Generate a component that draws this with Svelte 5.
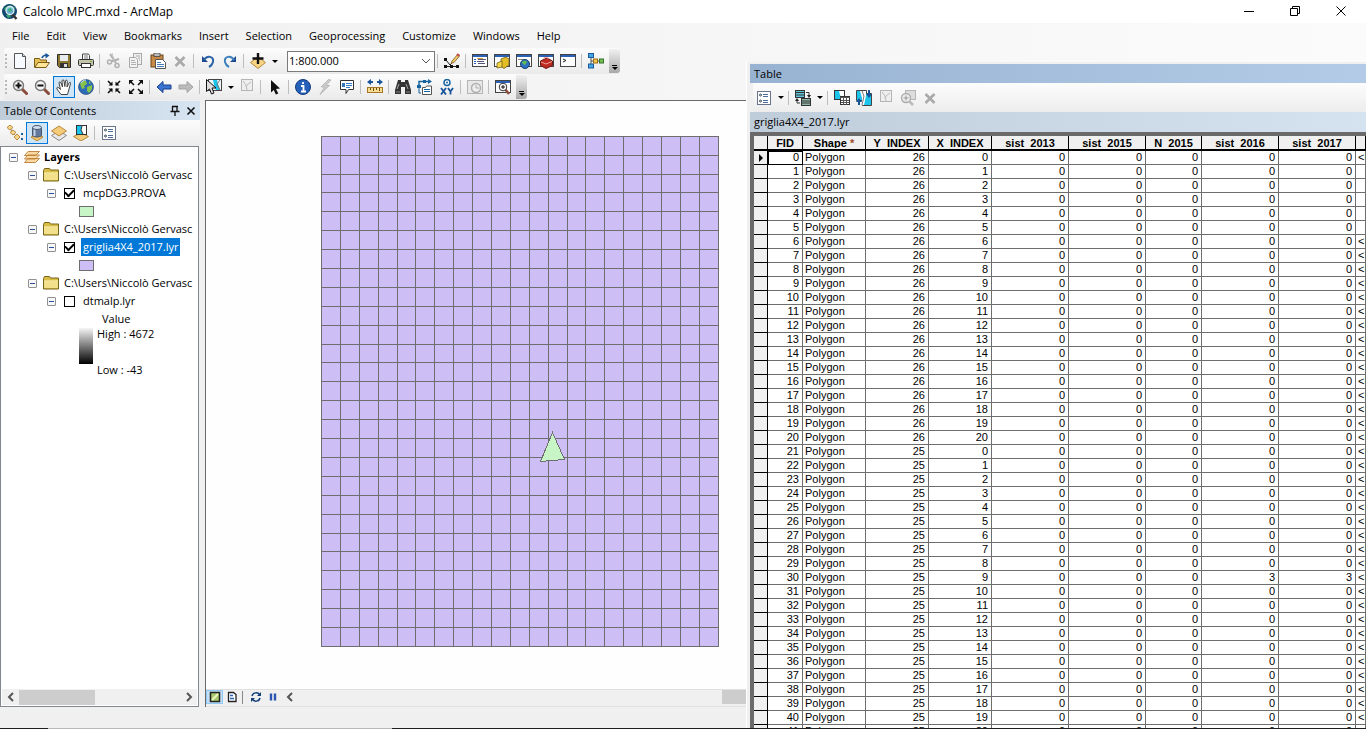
<script>
	const menus = ['File', 'Edit', 'View', 'Bookmarks', 'Insert', 'Selection', 'Geoprocessing', 'Customize', 'Windows', 'Help'];

	// '|' is a separator, a trailing '+' adds a drop-down arrow
	const standardBar = ['new', 'open', 'save', 'print', '|', 'cut', 'copy', 'paste', 'delete', '|', 'undo', 'redo', '|', 'addData+'];
	const windowBar = ['|', 'editor', '|', 'toc', 'catalog', 'search', 'toolbox', 'python', '|', 'model'];
	const toolsBar = [
		'zoomIn', 'zoomOut', 'pan', 'globe', '|', 'fixedIn', 'fixedOut', '|', 'back', 'forward', '|',
		'select+', 'clear', '|', 'pointer', '|', 'identify', 'link', 'popup', '|', 'measure', '|',
		'find', 'route', 'xy', '|', 'time', '|', 'viewer'
	];
	const tocBar = ['byOrder', 'bySource', 'byVisible', 'bySelect', '|', 'options'];
	const tableBar = ['options+', '|', 'related+', '|', 'selectAttr', 'switch', 'clear', 'zoomSel', 'delete'];

	const win = '<rect x=".5" y="1.5" width="15" height="12" fill="#fff" stroke="#444"/><rect x="1" y="2" width="14" height="2" fill="#2a62b8"/>';
	const glass = (sign) =>
		`<path d="M10 10l4.500 4.500" stroke="#8a4b3c" stroke-width="3" stroke-linecap="round"/><circle cx="6.500" cy="6.500" r="5" fill="#f4f4f4" stroke="#777" stroke-width="1.400"/><path d="${sign}" stroke="#111" stroke-width="2"/>`;

	const icons = {
		logo: '<circle cx="7.500" cy="7.500" r="7.500" fill="#12486f"/><path d="M2 5c2-4 8-5 11-1l-2 3-4-2-2 3zM4 11l3-1 2 3-3 1z" fill="#39a06e"/><path d="M10 10l4.500 5" stroke="#333" stroke-width="2.500"/><circle cx="8" cy="6.500" r="4" fill="#7cc6ea" fill-opacity=".8" stroke="#dceaf2" stroke-width="1.300"/><path d="M6 5l3-1 1 3-3 1z" fill="#3fae78"/>',
		new: '<path d="M2.500.500h8l3 3v12h-11z" fill="#f7fbff" stroke="#555"/><path d="M10.500.500v3h3" fill="#cfe0f0" stroke="#555"/>',
		open: '<path d="M.500 14V5.500h5l1 1.500h6v7z" fill="#e8bf52" stroke="#7a5c1a"/><path d="M.800 14.500L4 9.500h11.500L12 14.500z" fill="#ffe596" stroke="#7a5c1a"/><path d="M8 5c1-3 3-3 5-3" fill="none" stroke="#17549a" stroke-width="1.600"/><path d="M11.500 0L15.500 2.500l-4 3z" fill="#17549a"/>',
		save: '<path d="M1.500 1.500h13v13h-11l-2-2z" fill="#8a7830" stroke="#2c2c2c"/><rect x="4" y="2" width="8" height="6" fill="#e8ecf2"/><rect x="4" y="10" width="8" height="4.500" fill="#333"/><rect x="8" y="11" width="3" height="3" fill="#ddd"/>',
		print: '<path d="M4.500 7V1h6l1 1.500V7" fill="#fff" stroke="#444"/><path d="M6 3h4M6 5h4" stroke="#777"/><rect x=".5" y="6.500" width="15" height="6" rx="1" fill="#c4c3ac" stroke="#333"/><rect x="3.500" y="10.500" width="9" height="4" fill="#fff" stroke="#333"/><path d="M12 8.500h2" stroke="#6b2"/>',
		cut: '<path d="M4 1l6 9M13 6l-8 2.500" stroke="#b0b0b0" stroke-width="2"/><circle cx="3.500" cy="9" r="2" fill="none" stroke="#b0b0b0" stroke-width="1.500"/><path d="M6 0l3 10" stroke="#c4c4c4"/><circle cx="11" cy="12.500" r="2" fill="none" stroke="#b0b0b0" stroke-width="1.500"/>',
		copy: '<rect x="5.500" y=".5" width="8" height="11" fill="#eee" stroke="#aaa"/><path d="M1.500 4.500h6l2 2v8h-8z" fill="#f3f3f3" stroke="#aaa"/><path d="M3 7.500h4M3 9.500h5M3 11.500h5M8 3h4M10 5h2M11 7h1" stroke="#b0b0b0"/>',
		paste: '<rect x="1" y="2" width="12" height="12" fill="#c98a45" stroke="#6b4218"/><rect x="4" y="0" width="6" height="3.500" fill="#bbb" stroke="#444" stroke-width=".8"/><path d="M5.500 6.500h7l3 3v6h-10z" fill="#fff" stroke="#555"/><path d="M7 9.500h4M7 11.500h7M7 13.500h7" stroke="#4d7db8"/>',
		delete: '<path d="M3.500 4l9 9M12.500 4l-9 9" stroke="#aaa" stroke-width="2.600"/>',
		undo: '<path d="M2 3v6h6z" fill="#1c4a8c"/><path d="M4 7c3-5 10-4 9 2-.5 2-2 4-4 5" fill="none" stroke="#2a62a8" stroke-width="2"/>',
		redo: '<path d="M14 3v6H8z" fill="#1c4a8c"/><path d="M12 7C9 2 2 3 3 9c.5 2 2 4 4 5" fill="none" stroke="#3b80bd" stroke-width="2"/>',
		addData: '<path d="M8 4l7.500 5.500L8 15.500.500 9.500z" fill="#f8d583" stroke="#b4873c"/><path d="M8 0v11M2.500 5.500h11" stroke="#111" stroke-width="2.400"/>',
		editor: '<path d="M1 13.500h14M2 7l4 5 3-3" stroke="#222" fill="none"/><path d="M0 12h3v3H0zM6 12h3v3H6zM12 12h3v3h-3zM0 5h3v3H0z" fill="#111"/><path d="M8 8l6-7 2 1.500-6 7-3 1z" fill="#f1c75e" stroke="#7b5a2d" stroke-width=".8"/><path d="M13 1l2 2" stroke="#c64b4b" stroke-width="2"/>',
		toc: win + '<path d="M2 6.500h2M2 8.500h2M2 10.500h2" stroke="#2a62b8"/><path d="M6 6.500h8M5 8.500h7M6 10.500h7" stroke="#557"/><path d="M5 5.500h6" stroke="#d29b3a"/>',
		catalog: win + '<path d="M7 6l5-2 3 2v6l-5 3.500-3-2z" fill="#e3bd25" stroke="#735f15" stroke-width=".8"/><path d="M3 10l5-2v6l-5 1z" fill="#f5d846" stroke="#735f15" stroke-width=".8"/>',
		search: win + '<path d="M2 6.500h8" stroke="#888"/><circle cx="9" cy="11" r="4.500" fill="#2d70bd" stroke="#1a406d"/><path d="M6 9c2-2 4-1 5 0l-2 3-2-1z" fill="#62b954"/>',
		toolbox: win + '<path d="M2.500 8L9 5l5.500 3v4.500L8 15.500l-5.500-3z" fill="#bd2a22" stroke="#6d1713"/><path d="M3 9l5 2 6-2.500M6 6V4.500h4V6" stroke="#f0a29b" fill="none"/>',
		python: win + '<path d="M3 6l3 1.500L3 9" stroke="#222" fill="none"/>',
		model: '<path d="M3 4v8M3 8h10" fill="none" stroke="#555"/><rect x=".5" y=".5" width="5" height="4" fill="#46a6e2" stroke="#1a5ba0"/><rect x=".5" y="11" width="5" height="4" fill="#46a6e2" stroke="#1a5ba0"/><rect x="5.500" y="6" width="4" height="4" fill="#f6c64f" stroke="#9b6d12"/><rect x="11.500" y="6" width="4" height="4" fill="#73bf55" stroke="#34752a"/>',
		zoomIn: glass('M3.500 6.500h6M6.500 3.500v6'),
		zoomOut: glass('M3.500 6.500h6'),
		pan: '<path d="M5 15.500L1 10c-1-2 1-2 2-1l1.500 1.500L3 4c0-1.500 1.500-1.500 2 0l1.500 4L6 2c0-1.500 2-1.500 2 0l.8 5.500L9.500 2c.2-1.500 2-1 1.800.3L11 8l2-4c.7-1.300 2-.7 1.500.7L12.500 12l-1 3.500z" fill="#fff" stroke="#444"/>',
		globe: '<circle cx="8" cy="8" r="7.500" fill="#2c6bb5" stroke="#1b3c69" stroke-width=".6"/><path d="M2 5c1-3 4-4 6-3l1 3-3 2 1 2-3 1zM9 8l5-2v4l-3 4-2-2zM11 2l2 2-2 1z" fill="#8bc34a"/><path d="M3 4c1-2 3-3 5-3" stroke="#cfe6ff" fill="none"/>',
		fixedIn: '<path d="M2 2l4 4M14 2l-4 4M2 14l4-4M14 14l-4-4" stroke="#111" stroke-width="1.600"/><path d="M6.500 2.500v4H2.500zM9.500 2.500v4h4zM6.500 13.500v-4h-4zM9.500 13.500v-4h4z" fill="#111"/>',
		fixedOut: '<path d="M2 2l4 4M14 2l-4 4M2 14l4-4M14 14l-4-4" stroke="#111" stroke-width="1.600"/><path d="M1 1h4.500L1 5.500zM15 1h-4.500L15 5.500zM1 15h4.500L1 10.500zM15 15h-4.500l4.500-4.500z" fill="#111"/>',
		back: '<path d="M1 8l6-5.500v3.500h8v4H7v3.500z" fill="#3a75d2" stroke="#173f8f"/>',
		forward: '<path d="M15 8L9 2.500v3.500H1v4h8v3.500z" fill="#bbb" stroke="#a2a2a2"/>',
		select: '<rect x="2.500" y=".5" width="13" height="11" fill="#eef6fa" stroke="#444"/><path d="M7 1h4l1 4 2 6h-4L8 6z" fill="#1cc3ea"/><path d="M14 1l-3 4 3 6" stroke="#777" fill="none"/><path d="M.500.500v12l3-2.500 2 5 2.500-1-2-5H10z" fill="#ddd" stroke="#111"/>',
		clear: '<rect x="2.500" y=".5" width="11" height="11" fill="#eee" stroke="#b5b5b5"/><path d="M4 2l3 4 1 5M12 3L8 6l-1 2" fill="none" stroke="#bbb"/>',
		pointer: '<path d="M4 1l9 8.500-4 .5 2.300 4.500-2.500 1-2-4.500L4 13.500z" fill="#111"/>',
		identify: '<circle cx="8" cy="8" r="7.500" fill="#2460b9" stroke="#153b7d"/><path d="M8 3v2M6 7h2.500v5M6 12.500h5" stroke="#fff" stroke-width="1.800" fill="none"/>',
		link: '<path d="M11.500.500L4 8h3.500L3 15.500 12.500 6.500H9L14 1z" fill="#ccc" stroke="#aaa" stroke-width=".7"/>',
		popup: '<path d="M1.500 1.500h13v9h-5L7 14.500v-4H1.500z" fill="#fff" stroke="#333"/><rect x="3" y="4" width="3" height="4" fill="#3377c2"/><path d="M7 4.500h6M7 6.500h6M7 8.500h4" stroke="#3377c2"/>',
		measure: '<path d="M0 3l4-3v2h2v2H4v2zM16 3l-4-3v2h-2v2h2v2z" fill="#17549a"/><rect x=".5" y="8.500" width="15" height="5" fill="#f6dd93" stroke="#a67825"/><path d="M3.500 9v2M6.500 9v3M9.500 9v2M12.500 9v3" stroke="#704e12"/>',
		find: '<path d="M3 1h3v2h4V1h3l3 10v4h-6V8H6v7H0v-4z" fill="#333"/><path d="M2 10l2-5M11 5l2 5" stroke="#aaa"/><path d="M1 13h4M11 13h4" stroke="#888"/>',
		route: '<path d="M2 6V2.500h10" fill="none" stroke="#17639d" stroke-width="1.500"/><path d="M11 0l4 2.500L11 5zM0 6h4v3H0zM6 1h3v3H6z" fill="#17639d"/><path d="M5.500 8.500h3l1-1.500h5v8.500h-9z" fill="#fff" stroke="#555"/><path d="M7 10.500h6M7 12.500h6M2 9v5h2" stroke="#17639d" fill="none"/>',
		xy: '<circle cx="8" cy="3.500" r="3" fill="#fff" stroke="#17639d" stroke-width="1.500"/><circle cx="8" cy="3.500" r="1" fill="#17639d"/><path d="M2 9l5 6.500M7 9l-5 6.500M9 9l2.500 3.500L14 9M11.500 12v3.500" stroke="#17549a" stroke-width="1.800" fill="none"/>',
		time: '<rect x=".5" y="1.500" width="15" height="13" fill="#e8e8e8" stroke="#b5b5b5"/><circle cx="9" cy="9" r="4.500" fill="#eee" stroke="#b0b0b0" stroke-width="1.500"/><path d="M9 6v3h3" stroke="#aaa" fill="none"/>',
		viewer: win + '<path d="M10 10l4 5" stroke="#8a4b3c" stroke-width="2.500"/><circle cx="8" cy="8" r="3.800" fill="#fff" stroke="#333"/><path d="M6 8h4M8 6v4" stroke="#111"/>',
		byOrder: '<path d="M3 3l3 5 4 4" fill="none" stroke="#888"/><path d="M3 0l3 2.500L3 5 0 2.500zM6 5l3 2.500L6 10 3 7.500zM10 9l3 3-3 3-3-3z" fill="#f7d38c" stroke="#b88c43"/><path d="M14 8h2v2h-2zM14 13h2v2h-2z" fill="#17639d"/>',
		bySource: '<path d="M2 12l6 4 6-4-6-2z" fill="#f2c469" stroke="#b4873c"/><path d="M3.500 2.500v8c2 2 7 2 9 0v-8z" fill="#63799b" stroke="#455672"/><path d="M5.500 4v7" stroke="#c2d0e4" stroke-width="2"/><ellipse cx="8" cy="2.500" rx="4.500" ry="2" fill="#d6dfec" stroke="#455672"/>',
		byVisible: '<path d="M8 6l7.500 4.500L8 15.500.500 10.500z" fill="#e9e9e9" stroke="#888"/><path d="M8 1l7.500 5L8 11 .500 6z" fill="#f4cb79" stroke="#b4873c"/>',
		bySelect: '<path d="M8 8l7.500 3.500L8 16 .500 11.500z" fill="#f4cb79" stroke="#b4873c"/><rect x="3.500" y=".5" width="10" height="9" fill="#fff" stroke="#333"/><path d="M4 1h5l-1 4 2 4H4z" fill="#1cc3ea"/><path d="M9 1L8 5l2 4" stroke="#333" fill="none"/>',
		options: '<rect x="1.500" y="1.500" width="13" height="13" fill="#fff" stroke="#68748a"/><circle cx="4.500" cy="5" r="1" fill="none" stroke="#345"/><circle cx="4.500" cy="11" r="1" fill="none" stroke="#345"/><path d="M7 4.500h5M7 6.500h5M7 10.500h5M7 12.500h5" stroke="#4e6c9c"/>',
		related: '<rect x=".5" y=".5" width="9" height="7" fill="#5ec7dc" stroke="#333"/><path d="M1 2.500h8M1 5h8" stroke="#333"/><rect x="6.500" y="8.500" width="9" height="7" fill="#8fb5a9" stroke="#333"/><path d="M7 11h8M7 13h8M11 2.500h3V6M5 13H2V10" stroke="#333" fill="none"/><path d="M12 5h4l-2 3zM0 11h4L2 8z" fill="#222"/>',
		selectAttr: '<rect x=".5" y=".5" width="10" height="9" fill="#fff" stroke="#333"/><path d="M1 1h4l1 4 2 4H1z" fill="#1cc3ea"/><rect x="6.500" y="6.500" width="9" height="8" fill="#fff" stroke="#333"/><path d="M6 7.500h10M7 10.500h8M7 12.500h8M9.500 7v8M12.500 7v8" stroke="#555"/>',
		switch: '<path d="M.500.500h10v3h5v12h-9v-5h-6z" fill="#1cc3ea" stroke="#444"/><path d="M4 1h6v5l-2 9H6V8z" fill="#fff"/><path d="M6 1l2 5-2 9" stroke="#777" fill="none"/><path d="M3 15v-4M13 0v5" stroke="#17549a" stroke-width="2"/><path d="M0 12l3-4 3 4zM10 4h6l-3 4z" fill="#17549a"/>',
		zoomSel: '<rect x="5.500" y=".5" width="10" height="9" fill="#ddd" stroke="#b5b5b5"/><circle cx="6" cy="8" r="4.500" fill="#eee" stroke="#aaa" stroke-width="1.300"/><path d="M3.500 8h5M6 5.500v5" stroke="#999"/><path d="M9 11l4 4" stroke="#bbb" stroke-width="2.500"/>',
		layers: '<path d="M4 9.500h11.500l-4 4H.500zM4 6h11.500l-4 4H.500zM4 2.500h11.500l-4 4H.500z" fill="#fbd9a0" stroke="#b9803a" stroke-width=".9"/>',
		folder: '<path d="M.500 3.500l1-2h5l1 1.500h8v11h-15z" fill="#d9bd45" stroke="#76641b"/><path d="M1 6.500h14v6.500H1z" fill="#f3e08a"/><path d="M1 6h14" stroke="#fff7c8"/>',
		dataView: '<rect x="3.500" y="3.500" width="9" height="9" fill="#a9c96a" stroke="#222" stroke-width="1.500"/><path d="M5 11l6-6" stroke="#e9f5c2" stroke-width="2"/>',
		layoutView: '<path d="M4.500 3.500h5l2.500 2v7H4.500z" fill="#fff" stroke="#222" stroke-width="1.300"/><path d="M6 6.500h3M6 9.500h4" stroke="#2a62b8" stroke-width="1.500"/>',
		refresh: '<path d="M4 7c1-4 6-4 8-1M12 9c-1 4-6 4-8 1" fill="none" stroke="#17407a" stroke-width="1.500"/><path d="M13 3v4H9zM3 13V9h4z" fill="#17407a"/>',
		pause: '<path d="M6 4.500v7M10 4.500v7" stroke="#2a55b0" stroke-width="2.400"/>',
		pin: '<path d="M5 3.500h6M5.500 3v5M10 3v5M3.500 8.500h9M8 9v4" stroke="#111" stroke-width="1.300"/>',
		close: '<path d="M4.500 4.500l7 7M11.500 4.500l-7 7" stroke="#111" stroke-width="1.600"/>',
		left: '<path d="M10 4L6 8l4 4" fill="none" stroke="#555" stroke-width="2"/>',
		right: '<path d="M6 4l4 4-4 4" fill="none" stroke="#555" stroke-width="2"/>'
	};

	const path = 'C:\\Users\\Niccolò Gervasc';
	let groups = $state([
		{ name: 'mcpDG3.PROVA', checked: true, color: '#c8f5c5' },
		{ name: 'griglia4X4_2017.lyr', checked: true, color: '#cdbff5', selected: true },
		{ name: 'dtmalp.lyr', checked: false }
	]);
	let scale = $state('1:800.000');

	const COLS = 21;
	const ROWS = 27;
	const CELL = 18.9;
	// grid lines snapped to whole pixels
	const xs = Array.from({ length: COLS + 1 }, (_, i) => Math.round(i * CELL - 0.1));
	const ys = Array.from({ length: ROWS + 1 }, (_, i) => Math.round(i * CELL - 0.3));

	const fields = ['FID', 'Shape *', 'Y_INDEX', 'X_INDEX', 'sist_2013', 'sist_2015', 'N_2015', 'sist_2016', 'sist_2017', ''];
	const records = Array.from({ length: 42 }, (_, fid) => {
		const hit = fid === 30 ? 3 : 0;
		const note = fid >= 1 && fid <= 5 ? '' : '<Null>';
		return [fid, 'Polygon', 26 - Math.floor(fid / COLS), fid % COLS, 0, 0, 0, hit, hit, note];
	});
</script>

{#snippet icon(name)}
	<svg class="icon" viewBox="0 0 16 16" fill="none" aria-hidden="true">{@html icons[name]}</svg>
{/snippet}

{#snippet tools(items)}
	{#each items as item}
		{#if item === '|'}
			<span class="sep"></span>
		{:else}
			{@const name = item.replace('+', '')}
			<button class="tool" class:active={name === 'pan' || name === 'bySource'} aria-label={name}>
				{@render icon(name)}
			</button>
			{#if item.endsWith('+')}
				<button class="drop" aria-label="{name} menu"></button>
			{/if}
		{/if}
	{/each}
{/snippet}

<div class="app">
	<header class="titlebar">
		{@render icon('logo')}
		<span class="title">Calcolo MPC.mxd - ArcMap</span>
		<div class="controls">
			<button aria-label="Minimize"><svg viewBox="0 0 11 11"><path d="M0 5.500h10" /></svg></button>
			<button aria-label="Restore"><svg viewBox="0 0 11 11"><path d="M.500 2.500h7v7h-7zM2.500 2.500v-2h7v7h-2" /></svg></button>
			<button aria-label="Close"><svg viewBox="0 0 11 11"><path d="M.500.500l9 9M9.500.500l-9 9" /></svg></button>
		</div>
	</header>

	<div class="chrome">
		<nav class="menubar">
			{#each menus as menu}
				<button>{menu}</button>
			{/each}
		</nav>
		<div class="toolbar">
			<span class="grip"></span>
			{@render tools(standardBar)}
			<select class="scale" bind:value={scale} aria-label="Map scale">
				<option>1:800.000</option>
			</select>
			{@render tools(windowBar)}
			<button class="more" aria-label="Toolbar options"></button>
		</div>
		<div class="toolbar">
			<span class="grip"></span>
			{@render tools(toolsBar)}
			<button class="more" aria-label="Toolbar options"></button>
		</div>
	</div>

	<main class="workspace">
		<aside class="toc">
			<div class="toc-head">
				<h2>Table Of Contents</h2>
				<button aria-label="Auto hide">{@render icon('pin')}</button>
				<button aria-label="Close panel">{@render icon('close')}</button>
			</div>
			<div class="toc-tools">{@render tools(tocBar)}</div>
			<div class="tree-box">
				<div class="tree">
					<div class="node root">
						<button class="toggle" aria-label="Collapse"></button>
						{@render icon('layers')}
						<b>Layers</b>
					</div>
					{#each groups as layer}
						<div class="node group">
							<button class="toggle" aria-label="Collapse"></button>
							{@render icon('folder')}
							<span>{path}</span>
						</div>
						<div class="node layer">
							<button class="toggle" aria-label="Collapse"></button>
							<label>
								<input type="checkbox" bind:checked={layer.checked} />
								<span class:selected={layer.selected}>{layer.name}</span>
							</label>
						</div>
						{#if layer.color}
							<div class="node legend"><i class="swatch" style="background: {layer.color}"></i></div>
						{/if}
					{/each}
					<div class="node value">Value</div>
					<div class="ramp">
						<i></i>
						<div><span>High : 4672</span><span>Low : -43</span></div>
					</div>
				</div>
				<div class="hscroll">
					<button aria-label="Scroll left">{@render icon('left')}</button>
					<div class="track"><i></i></div>
					<button aria-label="Scroll right">{@render icon('right')}</button>
				</div>
			</div>
		</aside>

		<section class="map">
			<svg class="canvas" shape-rendering="crispEdges" role="img" aria-label="Map">
				<g transform="translate(115 35)">
					<rect width={xs[COLS]} height={ys[ROWS]} fill="#cdbff5" />
					{#each xs as x}
						<rect {x} width="1" height={ys[ROWS] + 1} fill="#6e6e6e" />
					{/each}
					{#each ys as y}
						<rect {y} width={xs[COLS] + 1} height="1" fill="#6e6e6e" />
					{/each}
					<path d="M231.500 296.500l12 27-24 2z" fill="#c8f5c5" stroke="#6e6e6e" />
				</g>
			</svg>
			<div class="map-foot">
				<button class="on" aria-label="Data view">{@render icon('dataView')}</button>
				<button aria-label="Layout view">{@render icon('layoutView')}</button>
				<span class="bar"></span>
				<button aria-label="Refresh">{@render icon('refresh')}</button>
				<button aria-label="Pause drawing">{@render icon('pause')}</button>
				<button aria-label="Scroll left">{@render icon('left')}</button>
				<i class="thumb"></i>
			</div>
		</section>
	</main>
	<footer class="statusbar"></footer>
	<div class="taskbar"><i></i></div>

	<section class="table-window">
		<h2>Table</h2>
		<div class="table-tools">{@render tools(tableBar)}</div>
		<h3>griglia4X4_2017.lyr</h3>
		<div class="grid-box">
			<table>
				<colgroup>
					<col class="c-sel" /><col class="c-fid" /><col class="c-mid" /><col class="c-mid" /><col class="c-mid" />
					<col class="c-wide" /><col class="c-wide" /><col class="c-n" /><col class="c-wide" /><col class="c-wide" /><col />
				</colgroup>
				<thead>
					<tr>
						<th aria-label="Row"></th>
						{#each fields as field}
							<th>
								{#if field.endsWith('*')}
									<span>Shape <em>*</em></span>
								{:else}
									<span>{field}</span>
								{/if}
							</th>
						{/each}
					</tr>
				</thead>
				<tbody>
					{#each records as record, r}
						<tr class:current={r === 0}>
							<th>{#if r === 0}<i class="marker"></i>{/if}</th>
							{#each record as value}
								<td class:text={typeof value === 'string'}>{value}</td>
							{/each}
						</tr>
					{/each}
				</tbody>
			</table>
		</div>
	</section>
</div>

<style>
	:global(body) {
		margin: 0;
	}

	.app {
		position: relative;
		display: flex;
		flex-direction: column;
		height: 100vh;
		overflow: hidden;
		background: #f0f0f0;
		color: #000;
		font: 11px/18px 'Open Sans', 'Noto Sans', sans-serif;
	}

	.app * {
		box-sizing: border-box;
	}

	button {
		display: flex;
		align-items: center;
		justify-content: center;
		padding: 0;
		border: 0;
		background: none;
		color: inherit;
		font: inherit;
	}

	h2,
	h3 {
		margin: 0;
		font-size: 11px;
		font-weight: 400;
	}

	.icon {
		flex: none;
		width: 16px;
		height: 16px;
	}

	.titlebar {
		display: flex;
		align-items: center;
		height: 23px;
		padding: 0 2px;
		background: #fff;
	}

	.title {
		flex: 1;
		padding-left: 5px;
		font-size: 12px;
	}

	.controls {
		display: flex;
		height: 100%;
	}

	.controls button {
		width: 46px;
	}

	.controls svg {
		width: 11px;
		height: 11px;
		fill: none;
		stroke: #000;
	}

	.chrome {
		flex: none;
		height: 77px;
		background: linear-gradient(90deg, #f0f0f0, #fbfbfb);
	}

	.menubar {
		display: flex;
		gap: 1px;
		height: 25px;
		padding-left: 4px;
	}

	.menubar button {
		padding: 0 8px;
	}

	.toolbar {
		display: flex;
		align-items: center;
		width: max-content;
		height: 26px;
		margin-left: 4px;
		border-radius: 3px;
		background: linear-gradient(#fcfcfc, #eaeaea);
	}

	.grip {
		width: 2px;
		height: 14px;
		margin: 0 2px 0 1px;
		background: repeating-linear-gradient(#b8b8b8 0 2px, transparent 2px 4px);
	}

	.tool {
		width: 22px;
		height: 22px;
	}

	.tool.active {
		border: 1px solid #0078d7;
		background: #cfe4f5;
	}

	.sep {
		width: 1px;
		height: 14px;
		margin: 0 3px 0 2px;
		background: #bdbdbd;
	}

	.drop {
		width: 11px;
		height: 22px;
	}

	.drop::before {
		content: '';
		border: 3px solid transparent;
		border-top-color: #000;
		border-bottom: 0;
	}

	.scale {
		width: 148px;
		height: 21px;
		margin: 0 0 0 7px;
		padding: 0 1px;
		border: 1px solid #7a7a7a;
		border-radius: 0;
		appearance: none;
		background: #fff
			url("data:image/svg+xml,%3Csvg xmlns='http://www.w3.org/2000/svg' width='10' height='6'%3E%3Cpath d='M1 1l4 4 4-4' fill='none' stroke='%23555'/%3E%3C/svg%3E")
			no-repeat right 3px center;
		color: #000;
		font: inherit;
		line-height: 16px;
	}

	.more {
		flex-direction: column;
		justify-content: flex-end;
		gap: 1px;
		width: 11px;
		height: 24px;
		margin-left: 2px;
		padding-bottom: 3px;
		border-radius: 0 3px 3px 0;
		background: linear-gradient(#f0f0f0, #a8a8a8);
	}

	.more::before {
		content: '';
		width: 5px;
		height: 1px;
		background: #000;
	}

	.more::after {
		content: '';
		border: 3px solid transparent;
		border-top-color: #000;
		border-bottom: 0;
	}

	.workspace {
		flex: 1;
		display: flex;
		gap: 5px;
		min-height: 0;
	}

	.toc {
		display: flex;
		flex-direction: column;
		width: 200px;
		padding-top: 1px;
	}

	.toc-head {
		display: flex;
		align-items: center;
		height: 19px;
		padding: 0 1px 0 4px;
		background: linear-gradient(90deg, #bfccda, #d7e4f2);
	}

	.toc-head h2 {
		flex: 1;
	}

	.toc-tools {
		display: flex;
		align-items: center;
		height: 26px;
		padding-left: 4px;
		background: linear-gradient(#fcfcfc, #ececec);
	}

	.tree-box {
		flex: 1;
		display: flex;
		flex-direction: column;
		width: 199px;
		border: 1px solid #828790;
		background: #fff;
	}

	.tree {
		flex: 1;
		overflow: hidden;
		margin-right: 1px;
		padding-top: 1px;
	}

	.node {
		display: flex;
		align-items: center;
		height: 18px;
		white-space: nowrap;
	}

	.node b {
		padding-left: 4px;
		font-weight: 700;
	}

	.node .icon {
		margin-left: 6px;
	}

	.node span {
		padding: 0 2px;
	}

	.group span {
		margin-left: 3px;
	}

	.root {
		padding-left: 8px;
	}

	.group {
		padding-left: 27px;
	}

	.layer {
		padding-left: 46px;
	}

	.legend {
		padding-left: 78px;
	}

	.value {
		padding-left: 101px;
	}

	.toggle {
		flex: none;
		width: 9px;
		height: 9px;
		border: 1px solid #919191;
		border-radius: 1px;
		background: #f7f7f7;
	}

	.toggle::before {
		content: '';
		width: 5px;
		height: 1px;
		background: #2b4f9c;
	}

	.node label {
		display: flex;
		align-items: center;
	}

	.node input {
		display: grid;
		place-items: center;
		width: 11px;
		height: 11px;
		margin: 0 6px 0 8px;
		border: 1px solid #000;
		appearance: none;
		background: #fff;
	}

	.node input:checked::before {
		content: '';
		width: 7px;
		height: 4px;
		margin-bottom: 2px;
		border: solid #000;
		border-width: 0 0 2px 2px;
		rotate: -45deg;
	}

	.selected {
		background: #0078d7;
		color: #fff;
	}

	.swatch {
		width: 15px;
		height: 11px;
		border: 1px solid #6e6e6e;
	}

	.ramp {
		display: flex;
		gap: 4px;
		padding-left: 78px;
		line-height: 12px;
	}

	.ramp i {
		width: 14px;
		height: 36px;
		background: linear-gradient(#f5f5f5, #000);
	}

	.ramp div {
		display: flex;
		flex-direction: column;
		gap: 24px;
	}

	.hscroll {
		display: flex;
		align-items: center;
		height: 16px;
		margin: 0 1px 1px;
		background: #f0f0f0;
	}

	.hscroll button {
		width: 17px;
	}

	.track {
		flex: 1;
		height: 15px;
	}

	.track i {
		display: block;
		width: 47%;
		height: 100%;
		background: #cdcdcd;
	}

	.map {
		flex: 1;
		display: flex;
		flex-direction: column;
		border-top: 1px solid #696969;
		border-left: 1px solid #696969;
		background: #f0f0f0;
	}

	.canvas {
		display: block;
		flex: 1;
		width: 100%;
		min-height: 0;
		border-bottom: 1px solid #e0e0e0;
		background: #fefefe;
	}

	/* the floating table window covers everything right of the thumb */
	.map-foot {
		display: flex;
		align-items: center;
		width: 541px;
		height: 17px;
		padding-bottom: 2px;
		border-bottom: 1px solid #e0e0e0;
	}

	.map-foot button {
		width: 17px;
		height: 14px;
	}

	.map-foot .on {
		border: 1px solid #90c8f6;
		background: #c4def3;
	}

	.bar {
		width: 1px;
		height: 13px;
		margin: 0 4px 0 2px;
		background: #888;
	}

	.thumb {
		width: 25px;
		height: 14px;
		margin-left: auto;
		background: #cdcdcd;
	}

	.statusbar {
		height: 21px;
	}

	.taskbar {
		flex: none;
		height: 1px;
		background: #1c1c1c;
	}

	.taskbar i {
		display: block;
		width: 344px;
		height: 1px;
		margin-left: 48px;
		background: #b8b8b8;
	}

	.table-window {
		position: absolute;
		top: 62px;
		right: 0;
		bottom: 1px;
		left: 746px;
		display: flex;
		flex-direction: column;
		padding: 2px 0 0 3px;
		border-left: 1px solid #fff;
		background: #f0f0f0;
	}

	.table-window h2 {
		height: 19px;
		padding-left: 4px;
		line-height: 20px;
		background: linear-gradient(90deg, #98b3d2, #b3cbe6);
	}

	.table-tools {
		display: flex;
		align-items: center;
		height: 29px;
		margin-left: 3px;
		background: linear-gradient(#fcfcfc, #ededed);
	}

	.table-window h3 {
		height: 20px;
		padding-left: 4px;
		line-height: 20px;
		background: linear-gradient(90deg, #bfccda, #d5e2f0);
	}

	.grid-box {
		flex: 1;
		min-height: 0;
		overflow: hidden;
		border-top: 4px solid #6a6a6a;
		border-left: 4px solid #6a6a6a;
		background: #fff;
	}

	table {
		width: 100%;
		table-layout: fixed;
		border-spacing: 0;
		font: 11px/13px 'Liberation Sans', Arial, sans-serif;
	}

	.c-sel {
		width: 14px;
	}

	.c-fid {
		width: 35px;
	}

	.c-mid {
		width: 63px;
	}

	.c-wide {
		width: 77px;
	}

	.c-n {
		width: 56px;
	}

	th,
	td {
		height: 14px;
		padding: 0;
		overflow: hidden;
		white-space: nowrap;
	}

	th {
		border: solid #000;
		border-width: 0 1px 1px 0;
		background: #f0f0f0;
	}

	thead th {
		height: 15px;
		border-bottom-width: 2px;
		vertical-align: top;
	}

	/* cuts the header text just under its baseline */
	thead span {
		display: block;
		height: 12px;
		overflow: hidden;
		line-height: 14px;
	}

	em {
		color: #a04a2a;
		font-style: normal;
	}

	td {
		padding-right: 3px;
		border: solid #6e6e6e;
		border-width: 0 1px 1px 0;
		text-align: right;
	}

	td.text {
		padding: 0 0 0 2px;
		text-align: left;
		text-overflow: clip;
	}

	.current td:nth-child(2) {
		outline: 1px solid #000;
		outline-offset: -1px;
	}

	.marker {
		display: block;
		width: 0;
		margin-left: 5px;
		border: 4px solid transparent;
		border-left-color: #000;
		border-right: 0;
	}
</style>
